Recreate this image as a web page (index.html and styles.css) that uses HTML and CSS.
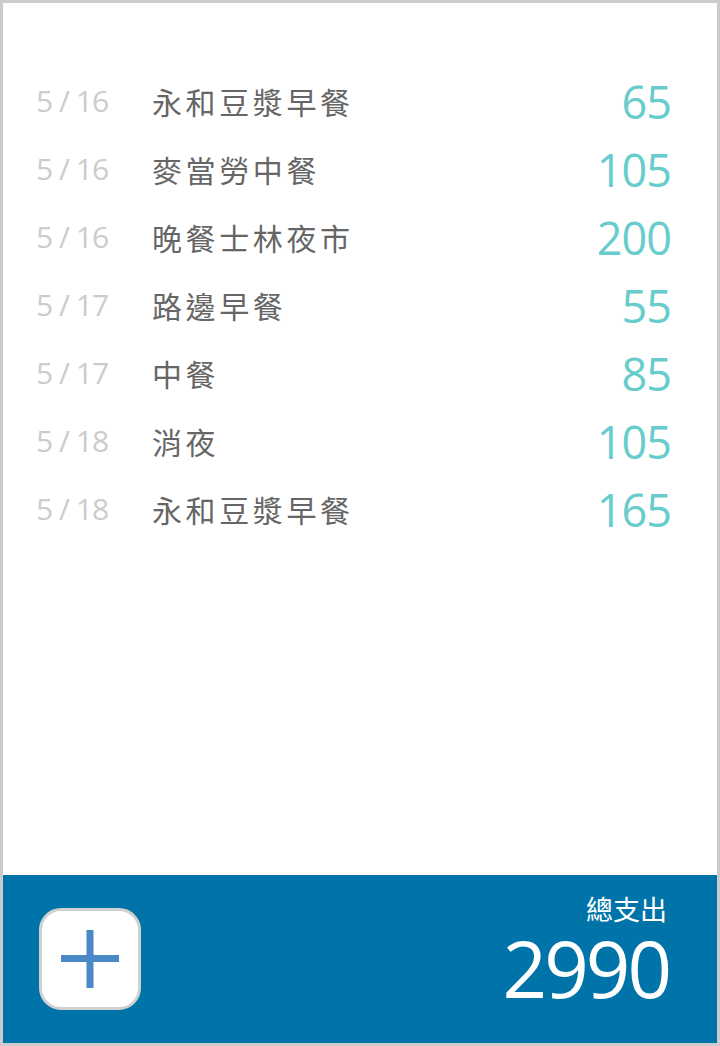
FILE: index.html
```html
<!DOCTYPE html>
<html lang="zh-Hant">
<head>
<meta charset="utf-8">
<title>記帳</title>
<link rel="stylesheet" href="styles.css">
</head>
<body>
<div class="app">
  <main class="list">
    <div class="row"><span class="date">5 / 16</span><span class="name">永和豆漿早餐</span><span class="amount">65</span></div>
    <div class="row"><span class="date">5 / 16</span><span class="name">麥當勞中餐</span><span class="amount">105</span></div>
    <div class="row"><span class="date">5 / 16</span><span class="name">晚餐士林夜市</span><span class="amount">200</span></div>
    <div class="row"><span class="date">5 / 17</span><span class="name">路邊早餐</span><span class="amount">55</span></div>
    <div class="row"><span class="date">5 / 17</span><span class="name">中餐</span><span class="amount">85</span></div>
    <div class="row"><span class="date">5 / 18</span><span class="name">消夜</span><span class="amount">105</span></div>
    <div class="row"><span class="date">5 / 18</span><span class="name">永和豆漿早餐</span><span class="amount">165</span></div>
  </main>
  <footer class="footer">
    <button class="add" aria-label="新增">
      <svg width="58" height="58" viewBox="0 0 58 58"><rect x="0" y="25" width="58" height="7" fill="#4a88c8"/><rect x="25.5" y="0" width="7" height="58" fill="#4a88c8"/></svg>
    </button>
    <div class="total">
      <div class="total-label">總支出</div>
      <div class="total-value">2990</div>
    </div>
  </footer>
</div>
</body>
</html>
```
FILE: styles.css
```css
html, body {
  margin: 0;
  padding: 0;
  background: #fff;
}
.app {
  box-sizing: border-box;
  width: 720px;
  height: 1046px;
  border: 3px solid #cccccc;
  display: flex;
  flex-direction: column;
  font-family: "Open Sans", "Noto Sans CJK TC", sans-serif;
}
.list {
  flex: 1;
  padding: 64px 46px 0 33px;
  display: flex;
  flex-direction: column;
}
.row {
  height: 68px;
  display: flex;
  align-items: center;
}
.date {
  width: 116px;
  font-size: 30px;
  letter-spacing: -1px;
  line-height: 1;
  color: #cccccc;
  font-family: "Open Sans", sans-serif;
}
.name {
  flex: 1;
  font-family: "Noto Sans CJK TC", sans-serif;
  font-size: 30px;
  letter-spacing: 3.6px;
  line-height: 1;
  color: #666666;
}
.amount {
  font-size: 45px;
  letter-spacing: -1px;
  line-height: 1;
  color: #66cccc;
  font-family: "Open Sans", sans-serif;
}
.footer {
  height: 168px;
  flex: none;
  background: #0074a8;
  display: flex;
  align-items: center;
  justify-content: space-between;
  padding: 0 48px 0 36px;
}
.add {
  box-sizing: border-box;
  width: 102px;
  height: 102px;
  border: 3px solid #d0d0d0;
  border-radius: 22px;
  background: #fff;
  padding: 0;
  display: flex;
  align-items: center;
  justify-content: center;
}
.total {
  align-self: flex-start;
  padding-top: 19px;
  display: flex;
  flex-direction: column;
  align-items: flex-end;
  gap: 4px;
  color: #fff;
}
.total-label {
  font-family: "Noto Sans CJK TC", sans-serif;
  font-size: 27px;
  line-height: 30px;
  margin-right: 2px;
}
.total-value {
  font-size: 78px;
  letter-spacing: -3px;
  line-height: 80px;
  font-family: "Open Sans", sans-serif;
}
```
